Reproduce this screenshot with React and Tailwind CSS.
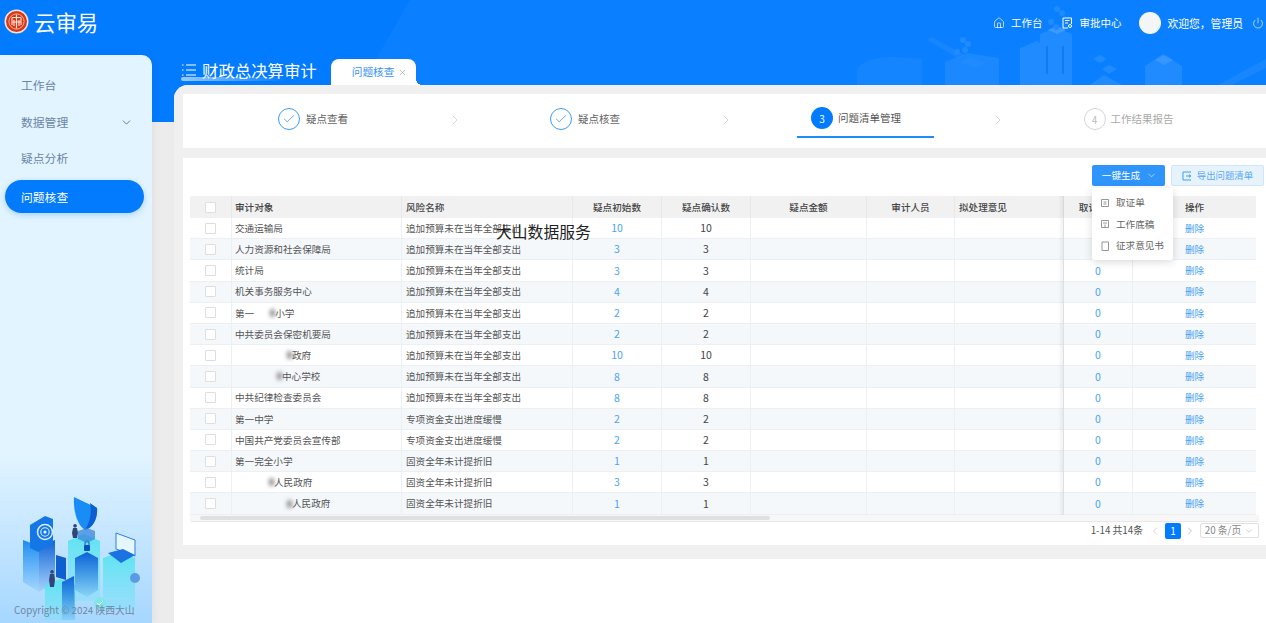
import React from 'react';
import { Home, ChevronDown, ChevronRight, ChevronLeft, Power, Check, X } from 'lucide-react';

const FONT = "font-['Noto_Sans_CJK_SC','Noto_Sans',sans-serif]";

const rows = [
  { name: '交通运输局', risk: '追加预算未在当年全部支出', n: 10 },
  { name: '人力资源和社会保障局', risk: '追加预算未在当年全部支出', n: 3 },
  { name: '统计局', risk: '追加预算未在当年全部支出', n: 3 },
  { name: '机关事务服务中心', risk: '追加预算未在当年全部支出', n: 4 },
  { name: '小学', pre: '第一', gap: 'w-[21px]', risk: '追加预算未在当年全部支出', n: 2 },
  { name: '中共委员会保密机要局', risk: '追加预算未在当年全部支出', n: 2 },
  { name: '政府', gap: 'w-[57px]', risk: '追加预算未在当年全部支出', n: 10 },
  { name: '中心学校', gap: 'w-[47px]', risk: '追加预算未在当年全部支出', n: 8 },
  { name: '中共纪律检查委员会', risk: '追加预算未在当年全部支出', n: 8 },
  { name: '第一中学', risk: '专项资金支出进度缓慢', n: 2 },
  { name: '中国共产党委员会宣传部', risk: '专项资金支出进度缓慢', n: 2 },
  { name: '第一完全小学', risk: '固资全年未计提折旧', n: 1 },
  { name: '人民政府', gap: 'w-[39px]', risk: '固资全年未计提折旧', n: 3 },
  { name: '人民政府', gap: 'w-[57px]', risk: '固资全年未计提折旧', n: 1 },
];

function Logo() {
  return (
    <svg width="25" height="25" viewBox="0 0 25 25" className="shrink-0">
      <circle cx="12.5" cy="12.5" r="12" fill="#f6e4d8" />
      <circle cx="12.5" cy="12.5" r="10.5" fill="#d8391b" />
      <circle cx="12.5" cy="12.5" r="7.6" fill="none" stroke="#f7c8b4" strokeWidth="0.8" />
      <path d="M8 8.500h9M12.500 5.500v14M8 8.500v7.500M17 8.500v7.500M10 11v6M15 11v6M8 13h9" stroke="#fbe6da" strokeWidth="1.1" fill="none" />
    </svg>
  );
}

function HeaderArt() {
  return (
    <svg className="absolute left-0 top-0" width="1266" height="122" viewBox="0 0 1266 122">
      <path d="M410 0H1266V122H340Z" fill="#1787ff" opacity="0.4" />
      <g fill="#3f9bff" opacity="0.42">
        <path d="M857 72c0-9 18-15 34-15s31 2 31 2v26h-65Z" opacity="0.5" />
        <path d="M927 40l5-3 33 18-6 4Z" opacity="0.55" />
        <path d="M945 62l22-9 32 5v27h-54Z" opacity="0.8" />
        <path d="M960 62l10-5 16 6-10 5Z" />
        <circle cx="963" cy="40" r="3" /><circle cx="968" cy="44" r="3" /><circle cx="957" cy="52" r="3" /><circle cx="965" cy="50" r="3" />
        <path d="M1020 48l17-7 3 2v42h-20Z" />
        <path d="M1040 34l16-7 16 7v51h-32Z" />
        <path d="M1048 30l9-4 9 4-9 4Z" fill="#82c1ff" />
        <path d="M1046 46h2v28h-2ZM1062 46h2v28h-2Z" fill="#1a77de" />
        <circle cx="1057" cy="9" r="3" /><circle cx="1062" cy="13" r="3" /><circle cx="1051" cy="22" r="3" /><circle cx="1056" cy="27" r="3" />
        <path d="M1093 59l7-4 7 4-7 4ZM1102 69l7-4 8 4-8 5Z" />
        <path d="M1090 85l14-10 18 10Z" />
        <path d="M1145 66l18-12 19 12v19h-37Z" />
        <path d="M1155 60l9-5 9 5-9 5Z" fill="#72b8ff" />
        <path d="M1218 85l48-26v9l-34 17Z" opacity="0.6" />
      </g>
    </svg>
  );
}

function SideArt() {
  return (
    <svg width="152" height="143" viewBox="0 480 152 143" className="block">
      <defs>
        <linearGradient id="a" x1="0" y1="0" x2="0" y2="1"><stop offset="0" stopColor="#1b8cf2" /><stop offset="1" stopColor="#1b8cf2" stopOpacity="0.08" /></linearGradient>
        <linearGradient id="b" x1="0" y1="0" x2="0" y2="1"><stop offset="0" stopColor="#5de3f2" /><stop offset="1" stopColor="#5de3f2" stopOpacity="0.25" /></linearGradient>
        <linearGradient id="c" x1="0" y1="0" x2="0" y2="1"><stop offset="0" stopColor="#0f62d8" /><stop offset="1" stopColor="#0f62d8" stopOpacity="0.08" /></linearGradient>
      </defs>
      <path d="M8 594l24-16 24 16-24 16Z" fill="none" stroke="#a5e4f6" strokeWidth="0.6" />
      <path d="M23 540l16 6v46l-16-10Z" fill="url(#a)" />
      <path d="M39 546l16-6v42l-16 10Z" fill="url(#c)" />
      <path d="M30 525l15-9 8 3v24l-15 9-8-4Z" fill="#1577e6" />
      <circle cx="45" cy="532" r="7.500" fill="none" stroke="#d7efff" strokeWidth="1.5" />
      <circle cx="45" cy="532" r="4.200" fill="none" stroke="#d7efff" strokeWidth="1.1" />
      <circle cx="45" cy="532" r="1.500" fill="#fff" />
      <path d="M68 541l16-7 16 7v60H68Z" fill="url(#b)" />
      <path d="M75 558l12-6 11 6v32l-11 7-12-7Z" fill="url(#c)" />
      <path d="M74 497l23 11c1 10-4 20-12 22-7-4-12-18-11-33Z" fill="#1a8cf5" />
      <path d="M90 503l7 5c1 10-4 20-12 22 5-8 7-17 5-27Z" fill="#0c5fd0" />
      <rect x="84" y="545" width="6" height="6" rx="1" fill="#0c4fb8" />
      <path d="M85 545v-2a2 2 0 0 1 4 0v2" fill="none" stroke="#0c4fb8" />
      <path d="M78 531l9-3 8 3v8l-8 4-9-4Z" fill="#3a86dc" opacity="0.75" />
      <path d="M103 558l16-6 16 6v52h-32Z" fill="url(#b)" />
      <path d="M116 533l19 7v16l-19-7Z" fill="#e6f6ff" stroke="#2a7fe8" strokeWidth="1" />
      <path d="M108 553l15-4 12 6-14 8Z" fill="#1a73e0" />
      <path d="M45 585l15-6 15 6v35H45Z" fill="url(#b)" />
      <path d="M62 582l12-6 1 44H62Z" fill="url(#c)" />
      <path d="M56 555l10 3v22l-10-3Z" fill="#0e5fd0" />
      <circle cx="135" cy="578" r="5" fill="#5a9be8" />
      <circle cx="100" cy="603" r="6" fill="#7fe6ea" />
      <path d="M97 603l2 2 4-4" stroke="#fff" fill="none" />
      <path d="M52 570a1.800 1.800 0 1 0 .1 0ZM50 574h4l1 6-1 7h-4l-1-7Z" fill="#2f4778" />
      <path d="M75 524a1.800 1.800 0 1 0 .1 0ZM73 528h4l1 5-1 5h-4l-1-5Z" fill="#2f4778" />
    </svg>
  );
}

function Steps() {
  const Item = ({ children }) => <div className="flex h-[44px] items-center gap-[6px] pt-[6px]">{children}</div>;
  const Arrow = () => <ChevronRight size={16} strokeWidth={1} className="-mt-[2px] shrink-0 text-[#c4c4c4]" />;
  const Done = () => (
    <div className="flex h-[22px] w-[22px] items-center justify-center rounded-full border border-[#3f9bf8]">
      <Check size={14} strokeWidth={1.3} className="text-[#2f8ff5]" />
    </div>
  );
  return (
    <div className="grid h-[54px] grid-cols-[280px_271px_272px_1fr] bg-white">
      <div className="flex items-start">
        <div className="flex flex-1 justify-center pr-[4px]"><Item><Done /><span className="text-[10.5px] text-[#666]">疑点查看</span></Item></div>
        <div className="flex h-full items-center"><Arrow /></div>
      </div>
      <div className="flex items-start">
        <div className="flex flex-1 justify-center pr-[11px]"><Item><Done /><span className="text-[10.5px] text-[#666]">疑点核查</span></Item></div>
        <div className="flex h-full items-center"><Arrow /></div>
      </div>
      <div className="flex items-start">
        <div className="flex flex-1 justify-center pl-[7px]">
          <div className="flex h-[44px] w-[137px] items-center gap-[5px] border-b-[2px] border-[#1d8cf8] pl-[14px] pt-[6px]">
            <div className="flex h-[22px] w-[22px] items-center justify-center rounded-full bg-[#037bff] text-[10px] text-white">3</div>
            <span className="text-[10.5px] text-[#555]">问题清单管理</span>
          </div>
        </div>
        <div className="flex h-full items-center"><Arrow /></div>
      </div>
      <div className="flex items-start">
        <div className="flex flex-1 justify-center pr-[15px]">
          <Item>
            <div className="flex h-[22px] w-[22px] items-center justify-center rounded-full border border-[#d5d5d5] text-[10px] text-[#bbb]">4</div>
            <span className="-ml-px text-[10.5px] text-[#aaa]">工作结果报告</span>
          </Item>
        </div>
      </div>
    </div>
  );
}

function Box() {
  return <span className="block h-[11px] w-[11px] rounded-[1px] border border-[#dedede] bg-white" />;
}

function Table() {
  const th = 'border-r border-[#e8e8e8] text-[9.6px] font-medium text-[#444]';
  const cell = 'border-r border-b border-[#edf0f3]';
  const td = `${cell} text-[9.6px] text-[#555]`;
  const num = `${cell} text-center text-[10.5px]`;
  return (
    <div className="relative mx-[7px] mt-[10px] overflow-hidden rounded-[2px] border-b border-[#e8e8e8]">
      <table className="w-[1066px] table-fixed border-separate border-spacing-0">
        <colgroup>
          <col className="w-[42px]" /><col className="w-[170px]" /><col className="w-[171px]" /><col className="w-[89px]" /><col className="w-[89px]" /><col className="w-[116px]" /><col className="w-[88px]" /><col className="w-[109px]" /><col className="w-[69px]" /><col className="w-[123px]" />
        </colgroup>
        <thead>
          <tr className="h-[22px] bg-[#f1f1f1]">
            <th className={th}><div className="flex justify-center"><Box /></div></th>
            <th className={`${th} pl-[3px] text-left`}>审计对象</th>
            <th className={`${th} pl-[4px] text-left`}>风险名称</th>
            <th className={th}>疑点初始数</th>
            <th className={th}>疑点确认数</th>
            <th className={th}>疑点金额</th>
            <th className={th}>审计人员</th>
            <th className={`${th} pl-[4px] text-left`}>拟处理意见</th>
            <th className={th}>取证单数</th>
            <th className="text-[9.6px] font-medium text-[#444]">操作</th>
          </tr>
        </thead>
        <tbody>
          {rows.map((r, i) => (
            <tr key={i} className={`h-[21.2px] ${i % 2 ? 'bg-[#f4f8fb]' : 'bg-white'}`}>
              <td className={td}><div className="flex justify-center"><Box /></div></td>
              <td className={`${td} pl-[3px]`}>
                <div className="flex items-center whitespace-nowrap">
                  {r.pre && <span>{r.pre}</span>}
                  {r.gap && (
                    <span className={`flex h-[10px] shrink-0 items-center justify-end ${r.gap}`}>
                      <span className="h-[8px] w-[5px] rounded-full bg-[#8d8d8d] blur-[2px]" />
                    </span>
                  )}
                  <span>{r.name}</span>
                </div>
              </td>
              <td className={`${td} whitespace-nowrap pl-[4px]`}>{r.risk}</td>
              <td className={`${num} text-[#4aa3f5]`}>{r.n}</td>
              <td className={`${num} text-[#444]`}>{r.n}</td>
              <td className={cell} />
              <td className={cell} />
              <td className={cell} />
              <td className={`${num} text-[#4aa3f5]`}>0</td>
              <td className="border-b border-[#edf0f3] text-center text-[9.6px] text-[#4aa3f5]">删除</td>
            </tr>
          ))}
        </tbody>
      </table>
      <div className="flex h-[6px] items-center bg-[#f7f7f7] pl-[10px]">
        <div className="h-[4px] w-[570px] rounded-full bg-[#e0e0e0]" />
      </div>
      <div className="pointer-events-none absolute bottom-[6px] left-[868px] top-0 w-[6px] bg-[linear-gradient(to_left,rgba(0,0,0,0.07),rgba(0,0,0,0))]" />
    </div>
  );
}

function Dropdown() {
  const items = [
    ['取证单', <path key="a" d="M1.500 1.500h7v7h-7ZM3.500 4h3M3.500 6h3" />],
    ['工作底稿', <path key="b" d="M1.500 1.500h7v7h-7ZM3 4h4M5 5.500v3" />],
    ['征求意见书', <path key="c" d="M2 1h6.500v8.500H2Z" />],
  ];
  return (
    <div className="absolute right-[93px] top-[30px] z-20 flex h-[72px] w-[81px] flex-col justify-center gap-[6.5px] rounded-[2px] bg-white pl-[8px] shadow-[0_2px_8px_rgba(0,0,0,0.15)]">
      {items.map(([t, p]) => (
        <div key={t} className="flex h-[15px] items-center gap-[6px] text-[9.6px] text-[#666]">
          <svg width="10" height="10" viewBox="0 0 10 10" fill="none" stroke="#8a8a8a" strokeWidth="0.9">{p}</svg>
          <span className="whitespace-nowrap">{t}</span>
        </div>
      ))}
    </div>
  );
}

export default function App() {
  return (
    <div className={`relative flex h-[623px] w-[1266px] flex-col overflow-hidden bg-[linear-gradient(to_bottom,#037bff_122px,#ececec_122px)] ${FONT}`}>
      <HeaderArt />
      <header className="relative flex h-[55px] shrink-0 items-start pl-[4px] text-white">
        <div className="mt-[9px] flex items-center gap-[5px]">
          <Logo />
          <span className="text-[21.4px] leading-[25px]">云审易</span>
        </div>
        <div className="ml-auto mt-[12px] flex h-[22px] items-center pr-[2px] text-[10.5px]">
          <Home size={12} strokeWidth={1.4} />
          <span className="ml-[6px]">工作台</span>
          <svg className="ml-[20px]" width="11" height="12" viewBox="0 0 11 12" fill="none" stroke="#fff" strokeWidth="1"><path d="M9.500 7V1H1v10h5M3 3.500h4.500M3 6h3" /><circle cx="8" cy="9" r="1.500" /></svg>
          <span className="ml-[6px]">审批中心</span>
          <span className="ml-[18px] h-[22px] w-[22px] rounded-full bg-[#f3f5f7]" />
          <span className="ml-[6px] text-[10.8px]">欢迎您，管理员</span>
          <Power size={12} strokeWidth={1.3} className="ml-[9px]" />
        </div>
      </header>
      <div className="relative flex min-h-0 flex-1">
        <aside className="relative flex w-[152px] shrink-0 flex-col rounded-tr-[10px] bg-[linear-gradient(to_bottom,#e2f4ff_0%,#e2f4ff_70%,#a6d7ff_100%)] text-[11.8px] text-[#6a85a5] shadow-[2px_0_8px_rgba(0,0,0,0.05)]">
          <div className="mt-[21px] flex h-[18px] items-center pl-[21px]">工作台</div>
          <div className="mt-[19px] flex h-[18px] items-center justify-between pl-[21px] pr-[19px]">
            <span>数据管理</span>
            <ChevronDown size={13} strokeWidth={1.8} className="text-[#5d7898]" />
          </div>
          <div className="mt-[18px] flex h-[18px] items-center pl-[21px]">疑点分析</div>
          <div className="ml-[5px] mr-[8px] mt-[13px] flex h-[33px] items-center rounded-full bg-[#037bff] pl-[16px] text-white shadow-[0_2px_6px_rgba(3,123,255,0.25)]">问题核查</div>
          <div className="mt-auto"><SideArt /></div>
          <div className="absolute bottom-[5px] left-[14px] flex items-center whitespace-nowrap text-[9.8px] text-[#6f88a3]">Copyright © 2024 陕西大山</div>
        </aside>
        <main className="ml-[22px] flex min-w-0 flex-1 flex-col">
          <div className="relative flex h-[30px] shrink-0 items-start pl-[8px]">
            <div className="relative mt-[4px] flex items-center gap-[6px] text-white">
              <svg width="14" height="14" viewBox="0 0 14 14" stroke="#fff" strokeWidth="1.2"><path d="M0 2h1.500M4 2h10M0 7h1.500M4 7h10M0 12h1.500M4 12h10" /></svg>
              <span className="text-[16.4px] leading-[22px]">财政总决算审计</span>
              <span className="absolute -left-[1px] top-[18px] h-[4px] w-[105px] rounded-full bg-[linear-gradient(to_right,rgba(255,255,255,0.6),rgba(255,255,255,0))]" />
            </div>
            <div className="relative ml-[14px] mt-[4px] flex h-[26px] w-[85px] items-center rounded-t-[8px] bg-white pl-[21px]">
              <span className="text-[10.7px] text-[#3a94f5]">问题核查</span>
              <X size={9} strokeWidth={1.4} className="ml-[3px] text-[#888]" />
              <span className="absolute -right-[6px] bottom-0 h-[6px] w-[6px] bg-[radial-gradient(circle_at_100%_0,transparent_6px,#ffffff_6px)]" />
            </div>
          </div>
          <div className="flex min-h-0 flex-1 flex-col rounded-tl-[14px] bg-white">
            <div className="flex h-[474px] flex-col gap-[10px] rounded-tl-[14px] bg-[#f0f0f0] pl-[9px] pt-[9px]">
              <Steps />
              <section className="relative h-[387px] bg-white">
                <div className="flex h-[28px] items-end justify-end gap-[6px] pr-[2px]">
                  <button className="flex h-[21px] w-[73px] items-center justify-center gap-[6px] rounded-[2px] bg-[#2f95fb] pl-[2px] text-[9.6px] text-white">
                    一键生成<ChevronDown size={11} strokeWidth={1.2} />
                  </button>
                  <button className="flex h-[21px] w-[93px] items-center justify-center gap-[5px] rounded-[2px] border border-[#d3e6f7] bg-[#e6f2fc] text-[9.4px] text-[#5aa9f5]">
                    <svg width="10" height="10" viewBox="0 0 10 10" fill="none" stroke="#3f9cf5" strokeWidth="1"><path d="M9 1H1v8h8M4 5h5M7 3.500 8.800 5 7 6.500" /></svg>
                    导出问题清单
                  </button>
                </div>
                <Table />
                <Dropdown />
                <div className="absolute left-[313px] top-[62px] z-10 whitespace-nowrap text-[15.8px] leading-[24px] text-[#222]">大山数据服务</div>
                <div className="-mt-px flex h-[20px] items-center justify-end pr-[7px] text-[9.8px] text-[#555]">
                  <span>1-14 共14条</span>
                  <ChevronLeft size={12} strokeWidth={1.1} className="ml-[6px] text-[#aaa]" />
                  <span className="ml-[4px] flex h-[16px] w-[16px] items-center justify-center rounded-[2px] bg-[#037bff] text-[10px] text-white">1</span>
                  <ChevronRight size={12} strokeWidth={1.1} className="ml-[3px] text-[#999]" />
                  <span className="ml-[4px] flex h-[15px] w-[59px] items-center justify-center gap-[3px] rounded-[2px] border border-[#e0e0e0] text-[#888]">20 条/页<ChevronDown size={10} strokeWidth={1} /></span>
                </div>
              </section>
            </div>
          </div>
        </main>
      </div>
    </div>
  );
}
